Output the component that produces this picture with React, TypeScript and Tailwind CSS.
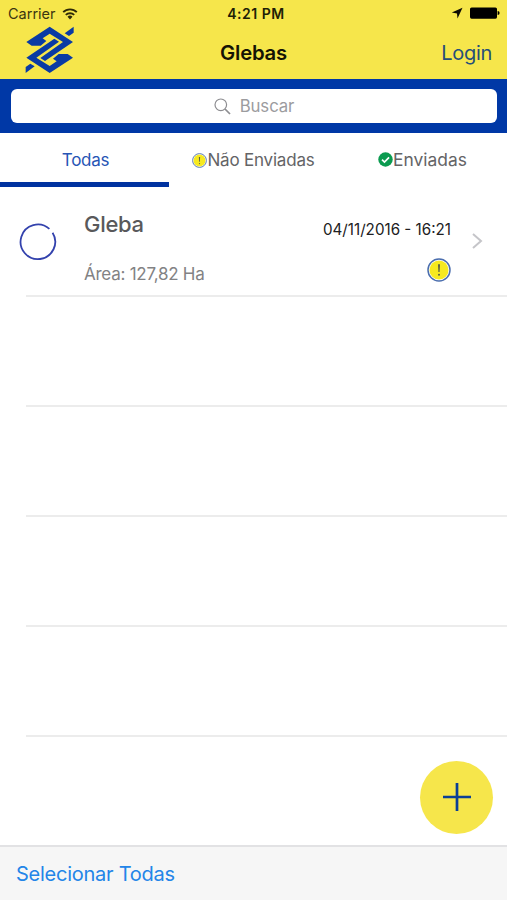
import clsx from 'clsx';

const tabs = [
  { label: 'Todas', icon: null, className: 'pl-[2px] text-[17px] tracking-[-0.3px]' },
  { label: 'Não Enviadas', icon: 'pending', className: 'text-[17px] tracking-[-0.2px]' },
  { label: 'Enviadas', icon: 'sent', className: 'text-[17.4px]' },
];

function BankLogo() {
  return (
    <svg
      viewBox="0 0 147 144"
      className="ml-[25px] mt-[26px] h-12 w-[49px]"
      fill="#0a3ba4"
    >
      <path d="M4 48 74 2 144 48 60 105 46 96 114 48 74 23 53 37 64 45 47 59H20Z" />
      <path d="M144 95 74 141 4 95 88 38 102 47 34 95 74 120 95 106 84 98 101 84H128Z" />
      <path d="M119 22 146 2v18l-14 10ZM29 121 2 141v-18l14-10Z" />
    </svg>
  );
}

function WifiIcon() {
  return (
    <svg viewBox="0 0 16 12" className="mb-px ml-[6px] h-3 w-4" fill="none">
      <path
        d="M1.2 4.2a9.6 9.6 0 0 1 13.6 0M3.8 6.9a6 6 0 0 1 8.4 0"
        stroke="#2d2907"
        strokeWidth="1.9"
      />
      <path d="m8 11.5-2.5-2.7a3.6 3.6 0 0 1 5 0Z" fill="#2d2907" />
    </svg>
  );
}

function PendingIcon({ className }: { className?: string }) {
  return (
    <svg viewBox="0 0 24 24" className={className}>
      <circle cx="12" cy="12" r="11" fill="#fff" stroke="#4b6eae" strokeWidth="1.5" />
      <circle cx="12" cy="12" r="9.5" fill="#f6e91f" />
      <path d="M11 6.2h2l-.4 7.8h-1.2Z" fill="#5b6145" />
      <circle cx="12" cy="16.8" r="1" fill="#5b6145" />
    </svg>
  );
}

function SentIcon({ className }: { className?: string }) {
  return (
    <svg viewBox="0 0 16 16" className={className}>
      <circle cx="8" cy="8" r="7.7" fill="#0b9b50" />
      <path d="m4.3 8.2 2.6 2.6 4.9-5" fill="none" stroke="#fff" strokeWidth="1.8" />
    </svg>
  );
}

function Header() {
  return (
    <header className="relative h-[79px] bg-[#f6e64b]">
      <BankLogo />
      <div className="absolute left-2 top-[6px] flex h-4 items-center text-[14.5px] text-[#3b3510]">
        Carrier
        <WifiIcon />
      </div>
      <div className="absolute inset-x-0 top-[5px] pl-[5px] text-center text-[14px] font-semibold leading-[18px] tracking-[0.5px] text-[#211e06]">
        4:21 PM
      </div>
      <div className="absolute right-[7px] top-[7px] flex items-center">
        <svg viewBox="0 0 12 12" className="mr-[6px] h-3 w-3">
          <path d="M11.5 .8 6.5 11.6 6 6.5 .8 5.6Z" fill="#0c0b02" />
        </svg>
        <svg viewBox="0 0 31 12" className="h-3 w-[31px]">
          <rect x="1" y=".5" width="27" height="11.2" rx="1.6" />
          <path d="M28.6 4v4q2 0 2-2t-2-2Z" />
        </svg>
      </div>
      <h1 className="absolute inset-x-0 top-[41px] text-center text-[20.3px] font-semibold leading-6 tracking-[-0.2px] text-[#151304]">
        Glebas
      </h1>
      <button
        type="button"
        className="absolute right-[15px] top-[41px] text-[20px] leading-6 tracking-[-0.3px] text-[#264f79]"
      >
        Login
      </button>
    </header>
  );
}

function SearchBar() {
  return (
    <div className="h-[54px] bg-[#0038a6] px-[10px] pl-[11px] pt-[10px]">
      <div className="flex h-[34px] items-center justify-center rounded-md bg-white pt-[1px] text-[16.8px] tracking-[-0.1px] text-[#9c9c9f]">
        <svg viewBox="0 0 17 17" className="mr-[9px] h-[17px] w-[17px]" fill="none" stroke="#8d8d91">
          <circle cx="6.8" cy="6.8" r="5.8" strokeWidth="1.2" />
          <path d="m11 11 5 5" strokeWidth="1.7" />
        </svg>
        Buscar
      </div>
    </div>
  );
}

function Tabs() {
  return (
    <nav className="grid h-[54px] grid-cols-3">
      {tabs.map((tab, index) => (
        <button
          type="button"
          key={tab.label}
          className={clsx(
            'flex items-center justify-center border-b-[5px]',
            tab.className,
            index === 0
              ? 'border-[#0032a0] text-[#2755b5]'
              : 'border-transparent text-[#646466]',
          )}
        >
          <span className="flex items-center pt-[6px]">
            {tab.icon === 'pending' && <PendingIcon className="mb-px h-[15px] w-[15px]" />}
            {tab.icon === 'sent' && <SentIcon className="mb-px h-[15px] w-[15px]" />}
            {tab.label}
          </span>
        </button>
      ))}
    </nav>
  );
}

function GlebaRow() {
  return (
    <div className="flex h-[110px] border-b-2 border-[#ececec] pr-6">
      <svg viewBox="0 0 38 38" className="-ml-[7px] mt-[35.5px] h-[38px] w-[38px] shrink-0" fill="none">
        <path d="M30.4 5.9A17.3 17.3 0 1 0 33.6 9.7" stroke="#3342ad" strokeWidth="1.8" />
      </svg>
      <div className="ml-[27px] flex-1">
        <h2 className="mt-[23px] text-[22px] font-medium leading-7 tracking-[-0.3px] text-[#59595b]">
          Gleba
        </h2>
        <p className="mt-6 text-[17px] leading-6 tracking-[-0.25px] text-[#828284]">
          Área: 127,82 Ha
        </p>
      </div>
      <div className="flex flex-col items-end">
        <time className="mt-[33px] text-[15.2px] leading-5 text-[#202022]">
          04/11/2016 - 16:21
        </time>
        <PendingIcon className="mt-[18px] h-6 w-6" />
      </div>
      <svg viewBox="0 0 12 18" className="ml-[20px] mt-[45px] h-[18px] w-3" fill="none">
        <path d="m2 2 8 7-8 7" stroke="#c5c5c9" strokeWidth="2" />
      </svg>
    </div>
  );
}

export default function App() {
  return (
    <div className="relative flex h-[900px] w-[507px] flex-col overflow-hidden bg-white font-[Inter,sans-serif]">
      <Header />
      <SearchBar />
      <Tabs />
      <main className="flex-1 pl-[26px]">
        <GlebaRow />
        {[0, 1, 2, 3].map((row) => (
          <div key={row} className="h-[110px] border-b-2 border-[#ececec]" />
        ))}
      </main>
      <footer className="flex h-[55px] items-center border-t-2 border-[#e2e2e4] bg-[#f6f6f6] pl-4">
        <button type="button" className="text-[20px] tracking-[-0.25px] text-[#2385e8]">
          Selecionar Todas
        </button>
      </footer>
      <button
        type="button"
        className="absolute bottom-[66px] right-[14px] flex h-[73px] w-[73px] items-center justify-center rounded-full bg-[#f6e64b]"
      >
        <svg viewBox="0 0 28 28" className="mb-px h-7 w-7" stroke="#0b3f96" strokeWidth="2.7">
          <path d="M14 0v28M0 14h28" />
        </svg>
      </button>
    </div>
  );
}
